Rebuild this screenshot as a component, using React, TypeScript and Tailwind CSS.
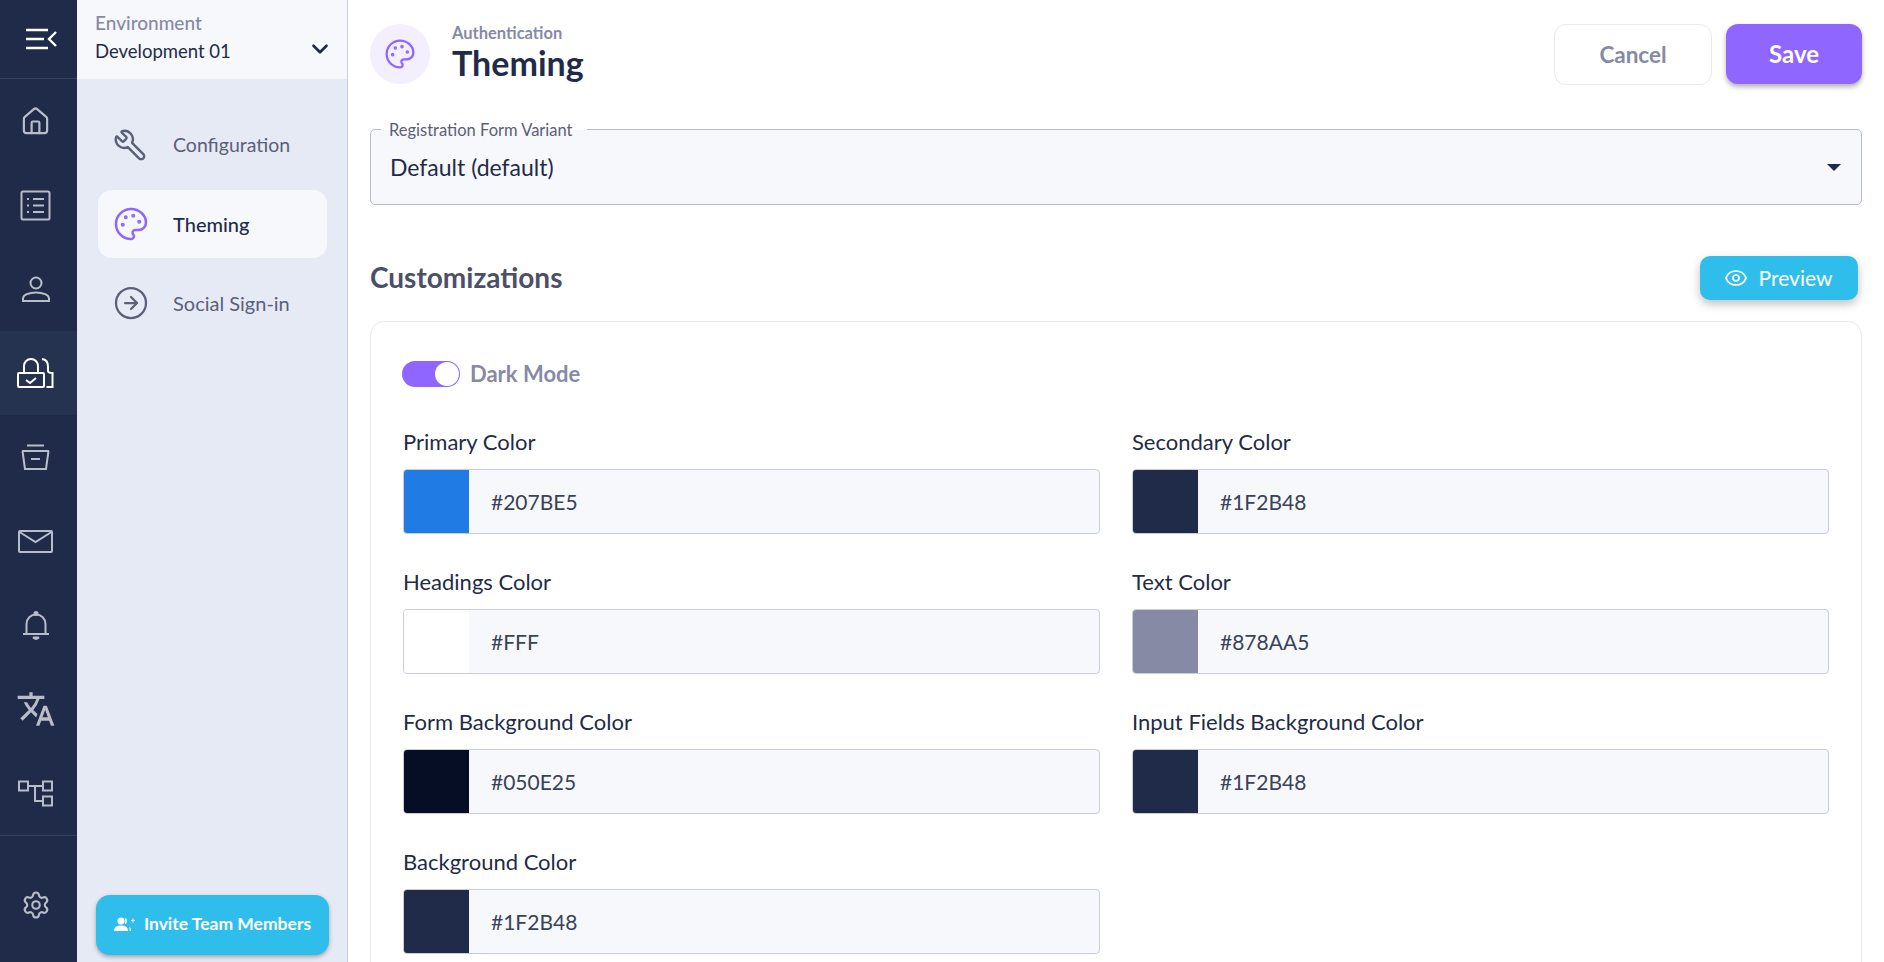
import { House, Palette, Settings, Wrench, CircleArrowRight, Eye, ChevronDown } from 'lucide-react';
import { MdOutlineTranslate } from 'react-icons/md';

function MenuIcon() {
  return (
    <svg width="32" height="22" viewBox="0 0 32 22" fill="none" stroke="white" strokeWidth="2.4">
      <path d="M1 2h22M1 11h18M1 20h22M31 4l-7 7 7 7" />
    </svg>
  );
}

function ListIcon() {
  return (
    <svg width="31" height="31" viewBox="0 0 31 31" fill="none" stroke="currentColor" strokeWidth="2">
      <rect x="1.5" y="1.5" width="28" height="28" rx="1.5" />
      <path d="M7 9h2M7 15.500h2M7 22h2M13 9h11M13 15.500h11M13 22h11" />
    </svg>
  );
}

function UserIcon() {
  return (
    <svg width="28" height="28" viewBox="0 0 28 28" fill="none" stroke="currentColor" strokeWidth="2">
      <circle cx="14" cy="8" r="5.500" />
      <path d="M1 26v-2.500C1 20 7 17.500 14 17.500s13 2.500 13 6V26z" />
    </svg>
  );
}

function LockIcon() {
  return (
    <svg width="37" height="30" viewBox="0 0 37 30" fill="none" stroke="white" strokeWidth="2">
      <rect x="1" y="15" width="26" height="14" rx="1" />
      <path d="M7 15V8a7 7 0 0 1 14 0v7M25 1c4 .5 6 3.500 6 7.500V13c0 1 1.500 2 4.500 2V29h-6" />
      <path d="M9 22l4 3 6-5" />
    </svg>
  );
}

function ArchiveIcon() {
  return (
    <svg width="31" height="26" viewBox="0 0 31 26" fill="none" stroke="currentColor" strokeWidth="2">
      <path d="M7 1.500h17M2 7h27M2.500 7l2.500 18h21l2.500-18M11 15h9" />
    </svg>
  );
}

function MailIcon() {
  return (
    <svg width="35" height="23" viewBox="0 0 35 23" fill="none" stroke="currentColor" strokeWidth="2">
      <rect x="1" y="1" width="33" height="21" rx="1" />
      <path d="M1.500 2l16 10 16-10" />
    </svg>
  );
}

function BellIcon() {
  return (
    <svg width="28" height="29" viewBox="0 0 28 29" fill="none" stroke="currentColor" strokeWidth="2">
      <path d="M1 23h26M4.500 23V13a9.500 9.500 0 0 1 19 0v10" />
      <circle cx="14" cy="2.500" r="1.500" fill="currentColor" />
      <path d="M11 26.500h6l-3 1.500z" fill="currentColor" />
    </svg>
  );
}

function TreeIcon() {
  return (
    <svg width="35" height="27" viewBox="0 0 35 27" fill="none" stroke="currentColor" strokeWidth="2">
      <rect x="1" y="1.500" width="9" height="9" />
      <rect x="25" y="1.500" width="9" height="9" />
      <rect x="25" y="16.500" width="9" height="9" />
      <path d="M10 6h15M17 6v15h8" />
    </svg>
  );
}

function InviteIcon() {
  return (
    <svg width="21" height="15" viewBox="0 0 21 15" fill="white">
      <circle cx="7" cy="4" r="3.500" />
      <path d="M0 14c0-4 3-5.500 7-5.500s7 1.500 7 5.500z" />
      <path d="M11 .8a3.500 3.500 0 0 1 0 6.400zM15.500 9.500c1 1 1.500 2.500 1.500 4.500h-1.500z" />
      <path d="M17 3h1.500V1.500h1V3H21v1h-1.500v1.500h-1V4H17z" />
    </svg>
  );
}

const railItems = [
  { icon: <House size={31} strokeWidth={1.7} /> },
  { icon: <ListIcon /> },
  { icon: <UserIcon /> },
];
const railItems2 = [
  { icon: <ArchiveIcon /> },
  { icon: <MailIcon /> },
  { icon: <BellIcon /> },
  { icon: <MdOutlineTranslate size={40} /> },
  { icon: <TreeIcon /> },
];

const colors = [
  [
    { label: 'Primary Color', value: '#207BE5', swatch: 'bg-[#207BE5]' },
    { label: 'Secondary Color', value: '#1F2B48', swatch: 'bg-[#1F2B48]' },
  ],
  [
    { label: 'Headings Color', value: '#FFF', swatch: 'bg-white' },
    { label: 'Text Color', value: '#878AA5', swatch: 'bg-[#878AA5]' },
  ],
  [
    { label: 'Form Background Color', value: '#050E25', swatch: 'bg-[#050E25]' },
    { label: 'Input Fields Background Color', value: '#1F2B48', swatch: 'bg-[#1F2B48]' },
  ],
  [{ label: 'Background Color', value: '#1F2B48', swatch: 'bg-[#1F2B48]' }],
];

function ColorField({ label, value, swatch }: { label: string; value: string; swatch: string }) {
  return (
    <div className="flex-1 min-w-0">
      <div className="text-[22px] leading-[26px] text-[#1F2B48] mb-[14px]">{label}</div>
      <div className="h-[65px] flex border border-[#c9ccdb] rounded-[4px] bg-[#f6f8fc] overflow-hidden">
        <div className={`w-[65px] shrink-0 ${swatch}`} />
        <div className="flex items-center pl-[22px] text-[21px] text-[#3a4258]">{value}</div>
      </div>
    </div>
  );
}

export default function App() {
  return (
    <div className="h-[962px] overflow-hidden flex bg-white font-['Lato','Noto_Sans',sans-serif]">
      <aside className="w-[77px] shrink-0 bg-[#1F2B48] flex flex-col text-[#b9bcc9]">
        <div className="h-[79px] shrink-0 flex items-center justify-center border-b border-[#38425c] pl-[4px]">
          <MenuIcon />
        </div>
        {railItems.map((item, i) => (
          <div key={i} className="h-[84px] shrink-0 flex items-center justify-center pr-[6px]">
            {item.icon}
          </div>
        ))}
        <div className="h-[84px] shrink-0 flex items-center justify-center bg-[#253250] pr-[6px]">
          <LockIcon />
        </div>
        {railItems2.map((item, i) => (
          <div key={i} className="h-[84px] shrink-0 flex items-center justify-center pr-[6px]">
            {item.icon}
          </div>
        ))}
        <div className="border-t border-[#38425c] flex-1 flex items-center justify-center pr-[6px] pt-[12px]">
          <Settings size={30} strokeWidth={1.7} />
        </div>
      </aside>

      <nav className="w-[271px] shrink-0 bg-[#e6eaf5] border-r border-[#c9cfe0] flex flex-col">
        <div className="h-[79px] shrink-0 bg-[#f6f8fc] flex items-center justify-between pl-[18px] pr-[14px]">
          <div>
            <div className="text-[19px] leading-[24px] -mt-[3px] mb-[2px] font-medium text-[#878AA5]">Environment</div>
            <div className="text-[18.5px] leading-[28px] text-[#1F2B48]">Development 01</div>
          </div>
          <ChevronDown size={26} strokeWidth={2.5} className="text-[#1F2B48] mt-[18px]" />
        </div>
        <div className="flex flex-col gap-[11px] pt-[32px] pl-[21px] pr-[20px]">
          <div className="h-[68px] flex items-center gap-[26px] pl-[15px] text-[19.5px] text-[#5b6078]">
            <Wrench size={34} strokeWidth={1.7} className="-scale-x-100" />
            <span className="-mt-[1px]">Configuration</span>
          </div>
          <div className="h-[68px] flex items-center gap-[24px] pl-[15px] text-[20px] font-medium text-[#1F2B48] bg-[#f6f8fc] rounded-[14px]">
            <Palette size={36} strokeWidth={1.7} className="text-[#8f66ff]" />
            <span className="-mt-[1px]">Theming</span>
          </div>
          <div className="h-[68px] flex items-center gap-[24px] pl-[15px] text-[20px] text-[#5b6078]">
            <CircleArrowRight size={36} strokeWidth={1.5} />
            <span className="-mt-[1px]">Social Sign-in</span>
          </div>
        </div>
        <div className="mt-auto ml-[19px] mr-[18px] mb-[7px] h-[60px] rounded-[14px] bg-[#2fbeeb] shadow-[0_2px_4px_rgba(0,0,0,0.3)] flex items-center justify-center gap-[9px] text-white font-bold text-[17.5px] pb-[2px]">
          <InviteIcon />
          Invite Team Members
        </div>
      </nav>

      <main className="flex-1 min-w-0 pl-[22px] pr-[22px] pt-[24px]">
        <div className="flex items-start justify-between">
          <div className="flex items-center gap-[22px]">
            <div className="w-[60px] h-[60px] rounded-full bg-[#f3effe] flex items-center justify-center">
              <Palette size={32} strokeWidth={1.7} className="text-[#8f66ff]" />
            </div>
            <div className="-mt-[2px]">
              <div className="text-[16.5px] leading-[20px] -mt-[1px] font-bold text-[#878AA5]">Authentication</div>
              <div className="text-[34px] leading-[40px] font-bold text-[#1F2B48]">Theming</div>
            </div>
          </div>
          <div className="flex gap-[14px]">
            <button className="w-[158px] h-[61px] rounded-[12px] border border-[#e6eaf5] bg-white text-[22.5px] font-bold text-[#878AA5]">
              Cancel
            </button>
            <button className="w-[136px] h-[60px] rounded-[12px] bg-[#8f66ff] shadow-[0_3px_5px_rgba(0,0,0,0.3)] text-[24px] font-bold text-white">
              Save
            </button>
          </div>
        </div>

        <div className="relative mt-[44px] h-[76px] rounded-[5px] border border-[#babcc4] bg-[#f6f8fc] flex items-center justify-between pl-[19px] pr-[20px]">
          <span className="absolute left-[10px] -top-[11px] pl-[8px] pr-[14px] bg-[linear-gradient(white_50%,#f6f8fc_50%)] text-[16.5px] leading-[22px] text-[#5b6078]">
            Registration Form Variant
          </span>
          <span className="text-[23px] text-[#1F2B48]">Default (default)</span>
          <div className="w-0 h-0 border-x-[7px] border-x-transparent border-t-[7px] border-t-[#1F2B48]" />
        </div>

        <div className="flex items-center justify-between mt-[51px] pr-[4px]">
          <h2 className="text-[28px] font-bold text-[#4b5068] -mt-[2px]">Customizations</h2>
          <button className="w-[158px] h-[44px] rounded-[10px] bg-[#2fbeeb] shadow-[0_4px_10px_rgba(0,0,0,0.25)] flex items-center justify-center gap-[11px] text-white text-[21px] pr-[2px]">
            <Eye size={24} strokeWidth={1.7} />
            Preview
          </button>
        </div>

        <div className="mt-[21px] rounded-[14px] border border-[#e6eaf5] pl-[32px] pr-[32px] pt-[39px] pb-[40px]">
          <div className="flex items-center gap-[10px] h-[26px] -ml-[1px]">
            <div className="w-[58px] h-[26px] rounded-full bg-[#8f66ff] flex items-center justify-end pr-[1px]">
              <div className="w-[24px] h-[24px] rounded-full bg-white" />
            </div>
            <span className="text-[22px] font-bold text-[#878AA5] -mt-[2px]">Dark Mode</span>
          </div>
          <div className="flex flex-col gap-[35px] mt-[42px]">
            {colors.map((row, i) => (
              <div key={i} className="flex gap-[32px]">
                {row.map((c) => (
                  <ColorField key={c.label} {...c} />
                ))}
                {row.length === 1 && <div className="flex-1" />}
              </div>
            ))}
          </div>
        </div>
      </main>
    </div>
  );
}
